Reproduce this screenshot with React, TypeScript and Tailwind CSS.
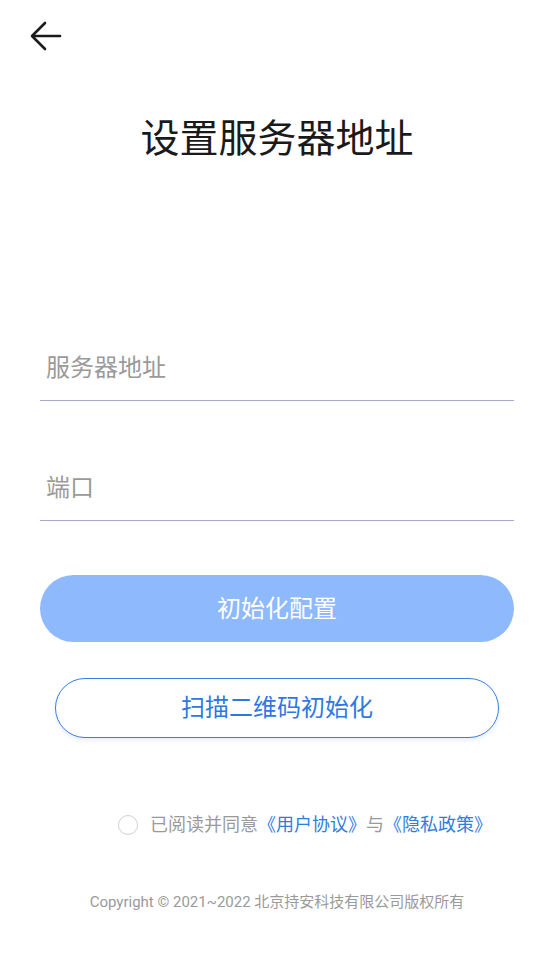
export default function App() {
  return (
    <div className="flex min-h-screen w-full flex-col bg-white font-['Roboto','Noto_Sans_CJK_SC',sans-serif]">
      {/* top bar */}
      <div className="flex h-[72px] items-center pl-[30px]">
        <svg width="32" height="30" viewBox="0 0 32 30" fill="none" stroke="#1a1a1a" strokeWidth="2.6" strokeLinecap="round" strokeLinejoin="round">
          <path d="M30 15H3" />
          <path d="M15 2L2 15l13 13" />
        </svg>
      </div>

      <h1 className="mt-[42px] text-center text-[39px] leading-[50px] font-normal text-[#1a1a1a]">
        设置服务器地址
      </h1>

      <div className="mt-[177px] flex flex-col px-10">
        <input
          placeholder="服务器地址"
          className="h-[60px] border-b border-[#a9a9cf] pb-[5px] pl-[6px] text-[24px] text-[#333] outline-none placeholder:text-[#9a9a9a]"
        />
        <input
          placeholder="端口"
          className="mt-[60px] h-[60px] border-b border-[#a9a9cf] pb-[5px] pl-[6px] text-[24px] text-[#333] outline-none placeholder:text-[#9a9a9a]"
        />

        <button className="mt-[54px] h-[67px] rounded-full bg-[#8fb9fd] text-[24px] text-white">
          初始化配置
        </button>

        <button className="mx-[15px] mt-[36px] h-[60px] rounded-full border-[1.5px] border-[#3a7de6] bg-white text-[24px] text-[#2f78e4] shadow-[0_2px_4px_rgba(58,125,230,0.15)]">
          扫描二维码初始化
        </button>

        <div className="mt-[74px] flex items-center pl-[78px] text-[18px] leading-[26px]">
          <span className="h-[20px] w-[20px] rounded-full border-[1.5px] border-[#cfcfcf]" />
          <span className="ml-[12px] text-[#9a9a9a]">已阅读并同意</span>
          <span className="text-[#2f7de1]">《用户协议》</span>
          <span className="text-[#9a9a9a]">与</span>
          <span className="text-[#2f7de1]">《隐私政策》</span>
        </div>

        <p className="mt-[54px] text-center text-[15px] leading-[20px] text-[#9a9a9a]">
          Copyright © 2021~2022 北京持安科技有限公司版权所有
        </p>
      </div>
    </div>
  );
}
